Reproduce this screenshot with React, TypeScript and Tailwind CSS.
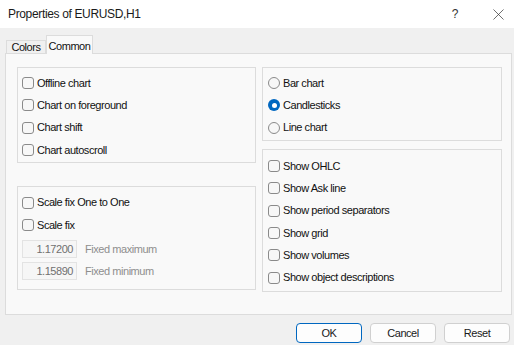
import { X } from "lucide-react";

const LEFT_TOP = ["Offline chart", "Chart on foreground", "Chart shift", "Chart autoscroll"];
const CHART_TYPES = ["Bar chart", "Candlesticks", "Line chart"];
const SHOW_OPTS = [
  "Show OHLC",
  "Show Ask line",
  "Show period separators",
  "Show grid",
  "Show volumes",
  "Show object descriptions",
];

function Check({ label }: { label: string }) {
  return (
    <div className="flex items-center h-[22.3px]">
      <div className="w-[12px] h-[12px] rounded-[3px] border border-[#8a8a8a] bg-[#f7f7f7] shrink-0" />
      <span className="ml-[3px]">{label}</span>
    </div>
  );
}

function Radio({ label, checked }: { label: string; checked?: boolean }) {
  return (
    <div className="flex items-center h-[22.3px]">
      {checked ? (
        <div className="w-[12px] h-[12px] rounded-full bg-[#0067c0] flex items-center justify-center shrink-0">
          <div className="w-[5px] h-[5px] rounded-full bg-white" />
        </div>
      ) : (
        <div className="w-[12px] h-[12px] rounded-full border border-[#8a8a8a] bg-[#f7f7f7] shrink-0" />
      )}
      <span className="ml-[3px]">{label}</span>
    </div>
  );
}

function Field({ value, label }: { value: string; label: string }) {
  return (
    <div className="flex items-center">
      <div className="w-[55px] h-[18px] border border-[#e3e3e3] bg-[#f6f6f6] flex items-center justify-end pr-[3px] text-[#707070]">
        {value}
      </div>
      <span className="ml-[8px] text-[#8e8e8e]">{label}</span>
    </div>
  );
}

function Button({ label, primary }: { label: string; primary?: boolean }) {
  return (
    <button
      className={
        primary
          ? "w-[66px] h-[20px] rounded-[4px] border border-[#0067c0] bg-[#fdfdfd] text-[#1a1a1a]"
          : "w-[66px] h-[20px] rounded-[4px] border border-[#d0d0d0] bg-[#fdfdfd] text-[#1a1a1a]"
      }
    >
      {label}
    </button>
  );
}

export default function App() {
  return (
    <div className="w-[516px] h-[348px] bg-white font-['Liberation_Sans',Arial,sans-serif] text-[11px] tracking-[-0.45px] text-[#111]">
      <div className="w-[514px] h-[345px] bg-[#f0f0f0] flex flex-col">
        {/* title bar */}
        <div className="h-[28px] bg-white flex items-center pl-[8px] shrink-0">
          <span className="text-[12px] tracking-[-0.35px] text-[#1a1a1a]">Properties of EURUSD,H1</span>
          <span className="ml-auto text-[12px] text-[#333] mr-[31px]">?</span>
          <X size={19} strokeWidth={0.9} className="text-[#333] mr-[6px]" />
        </div>

        {/* tabs */}
        <div className="h-[25px] flex items-end pl-[6px] shrink-0">
          <div className="w-[40px] h-[13px] border border-b-0 border-[#dcdcdc] bg-[#f0f0f0] flex items-center justify-center pt-[1px]">
            Colors
          </div>
          <div className="w-[47px] h-[19px] border border-b-0 border-[#dcdcdc] bg-[#f9f9f9] flex justify-center pt-[2px] -mb-px relative z-10">
            Common
          </div>
        </div>

        {/* panel */}
        <div className="ml-[5px] w-[507px] h-[262px] border border-[#dcdcdc] bg-[#f9f9f9] pt-[13px] pl-[11px] flex gap-[6px] shrink-0">
          <div className="w-[239px] flex flex-col gap-[23px]">
            <div className="h-[96px] border border-[#dcdcdc] pt-[4px] pl-[4px]">
              {LEFT_TOP.map((l) => (
                <Check key={l} label={l} />
              ))}
            </div>
            <div className="h-[104px] border border-[#dcdcdc] pt-[4.5px] pl-[4px]">
              <Check label="Scale fix One to One" />
              <Check label="Scale fix" />
              <div className="flex flex-col gap-[4px] mt-[4px]">
                <Field value="1.17200" label="Fixed maximum" />
                <Field value="1.15890" label="Fixed minimum" />
              </div>
            </div>
          </div>
          <div className="w-[240px] flex flex-col gap-[8px]">
            <div className="h-[74px] border border-[#dcdcdc] pt-[4px] pl-[5px]">
              {CHART_TYPES.map((l) => (
                <Radio key={l} label={l} checked={l === "Candlesticks"} />
              ))}
            </div>
            <div className="h-[143px] border border-[#dcdcdc] pt-[5px] pl-[5px]">
              {SHOW_OPTS.map((l) => (
                <Check key={l} label={l} />
              ))}
            </div>
          </div>
        </div>

        {/* footer */}
        <div className="flex justify-end gap-[8px] mt-[8px] pr-[4px]">
          <Button label="OK" primary />
          <Button label="Cancel" />
          <Button label="Reset" />
        </div>
      </div>
    </div>
  );
}
